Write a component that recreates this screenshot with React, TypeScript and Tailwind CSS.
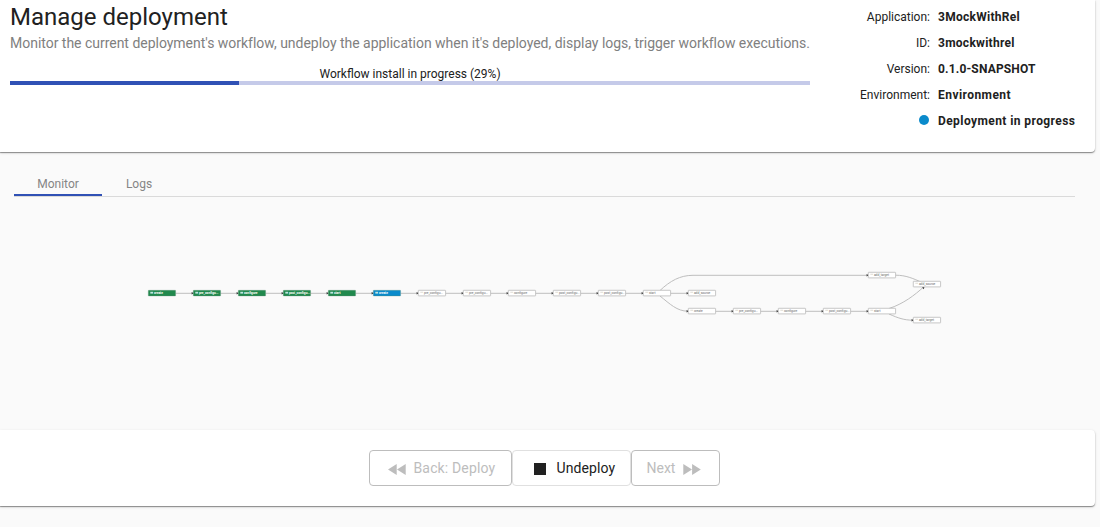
import React from "react";

const details = [
  { label: "Application:", value: "3MockWithRel", tracking: "tracking-[0.27px]" },
  { label: "ID:", value: "3mockwithrel", tracking: "tracking-[0.27px]" },
  { label: "Version:", value: "0.1.0-SNAPSHOT", tracking: "tracking-[0.17px]" },
  { label: "Environment:", value: "Environment", tracking: "tracking-[0.45px]" },
];

type Status = "done" | "running" | "pending";
type Step = { x: number; y: number; name: string; status: Status };

const mainSteps: [string, Status][] = [
  ["create", "done"],
  ["pre_configu...", "done"],
  ["configure", "done"],
  ["post_configu...", "done"],
  ["start", "done"],
  ["create", "running"],
  ["pre_configu...", "pending"],
  ["pre_configu...", "pending"],
  ["configure", "pending"],
  ["post_configu...", "pending"],
  ["post_configu...", "pending"],
  ["start", "pending"],
  ["add_source", "pending"],
];

const lowerSteps = ["create", "pre_configu...", "configure", "post_configu...", "start"];

const steps: Step[] = [
  ...mainSteps.map(([name, status], i) => ({ x: 148.3 + i * 45, y: 293, name, status })),
  ...lowerSteps.map((name, i) => ({ x: 688.3 + i * 45, y: 311, name, status: "pending" as Status })),
  { x: 868.3, y: 275, name: "add_target", status: "pending" },
  { x: 913.3, y: 284, name: "add_source", status: "pending" },
  { x: 913.3, y: 320, name: "add_target", status: "pending" },
];

const fills: Record<Status, string> = { done: "#21894d", running: "#0a8acb", pending: "#ffffff" };

function StepNode({ x, y, name, status }: Step) {
  const pending = status === "pending";
  return (
    <g>
      <rect x={x} y={y - 2.7} width={27.3} height={5.6} rx={0.4} fill={fills[status]} stroke={pending ? "#b0b0b0" : "#5e8d76"} strokeWidth={pending ? 0.7 : 0.35} />
      <rect x={x + 2} y={y - 1.2} width={2.8} height={pending ? 0.8 : 1.8} fill={pending ? "#d8d3c8" : "#bfe5e0"} />
      <text x={x + 5.6} y={y + 1.1} fontSize={3.2} fontWeight={pending ? 400 : 700} fill={pending ? "#666" : "#fff"}>{name}</text>
    </g>
  );
}

function Workflow() {
  const arrows: [number, number][] = [
    ...mainSteps.slice(1).map((_, i) => [193.3 + i * 45, 293] as [number, number]),
    ...lowerSteps.map((_, i) => [688.3 + i * 45, 311] as [number, number]),
    [868.3, 275],
    [913.3, 320],
  ];
  return (
    <svg className="block h-[233px] w-full font-[Roboto,sans-serif]" viewBox="0 197 1100 233" width="1100" height="233">
      <g fill="none" stroke="#bebebe" strokeWidth="1">
        {mainSteps.slice(1).map((_, i) => (
          <path key={i} d={`M${175.6 + i * 45} 293.3H${193 + i * 45}`} />
        ))}
        {lowerSteps.slice(1).map((_, i) => (
          <path key={i} d={`M${715.6 + i * 45} 311.3H${733 + i * 45}`} />
        ))}
        <path d="M660 290.5C670 281 680 275.3 693 275.3H868" />
        <path d="M660 296C670 304 677 311.2 688 311.2" />
        <path d="M895.6 275.2C906 275.2 913 278.5 921 282" />
        <path d="M889 308.5C903 304 915 295 923.5 287" />
        <path d="M889 314C898 318 904 320.2 913 320.2" />
      </g>
      <g fill="#333">
        {arrows.map(([x, y], i) => (
          <path key={i} d={`M${x - 1.7} ${y - 1}L${x + 0.4} ${y + 0.2}L${x - 1.7} ${y + 1.4}Z`} />
        ))}
        <path d="M922 287.6L924.4 286.8L923.9 289.2Z" />
      </g>
      {steps.map((step, i) => (
        <StepNode key={i} {...step} />
      ))}
    </svg>
  );
}

function DoubleArrow({ forward = false }: { forward?: boolean }) {
  return (
    <svg className="relative top-px h-[11px] w-[18px]" viewBox="0 0 18 12" preserveAspectRatio="none" fill="currentColor">
      <path d={forward ? "M0.3 0L9 6L0.3 12ZM9.1 0L17.8 6L9.1 12Z" : "M8.7 0L0 6L8.7 12ZM17.7 0L9 6L17.7 12Z"} />
    </svg>
  );
}

export default function App() {
  return (
    <div className="h-[527px] w-[1100px] overflow-hidden bg-[#fafafa] font-[Roboto,sans-serif] text-[#212121]">
      <header className="flex h-[152px] w-[1095px] rounded-br bg-white shadow-[0_1px_1px_rgba(0,0,0,0.38),0_1px_3px_rgba(0,0,0,0.16)]">
        <div className="ml-[10px] w-[800px]">
          <h1 className="h-[33px] whitespace-nowrap pt-px text-2xl leading-[33px]">Manage deployment</h1>
          <p className="h-5 whitespace-nowrap text-sm leading-5 tracking-[-0.02px] text-[#808080]">
            Monitor the current deployment's workflow, undeploy the application when it's deployed, display logs, trigger workflow executions.
          </p>
          <div className="mt-[13px] h-[15px] pt-px text-center text-xs leading-[15px]">Workflow install in progress (29%)</div>
          <div className="h-1 bg-[#c5cae9]">
            <div className="h-full w-[228.5px] bg-[#3051b5]" />
          </div>
        </div>
        <dl className="mt-1 ml-[20px] text-xs leading-[26px]">
          {details.map((d) => (
            <div key={d.label} className="flex h-[26px]">
              <dt className="mr-2 w-[100px] text-right">{d.label}</dt>
              <dd className={`font-bold whitespace-nowrap ${d.tracking}`}>{d.value}</dd>
            </div>
          ))}
          <div className="flex h-[26px] items-center">
            <dt className="mr-2 flex w-[100px] justify-end pr-px">
              <span className="relative -top-px size-[10px] rounded-full bg-[#0a8acb]" />
            </dt>
            <dd className="font-bold whitespace-nowrap tracking-[0.42px]">Deployment in progress</dd>
          </div>
        </dl>
      </header>

      <nav className="mt-5 ml-[14px] flex h-[25px] w-[1061px] border-b border-[#dadada] text-xs text-[#858585]">
        <div className="h-6 w-[88px] border-b-2 border-[#3051b5] pt-px text-center leading-[23px]">Monitor</div>
        <div className="w-[74px] pt-px text-center leading-[23px]">Logs</div>
      </nav>

      <Workflow />

      <footer className="flex h-[76px] w-[1095px] justify-center rounded-r bg-white pr-[7px] pt-5 text-sm shadow-[0_1px_1px_rgba(0,0,0,0.38),0_1px_3px_rgba(0,0,0,0.16)]">
        <button className="flex h-9 w-[143px] items-center rounded border border-[#bdbdbd] pl-[18px] text-[#bdbdbd]">
          <DoubleArrow />
          <span className="ml-2 tracking-[0.15px]">Back: Deploy</span>
        </button>
        <button className="flex h-9 w-[119px] items-center rounded border border-[#e0e0e0] pl-[21px]">
          <span className="relative top-px size-3 bg-[#212121]" />
          <span className="ml-[11px] tracking-[0.1px]">Undeploy</span>
        </button>
        <button className="flex h-9 w-[89px] items-center rounded border border-[#bdbdbd] pl-[15px] text-[#bdbdbd]">
          <span className="mr-2">Next</span>
          <DoubleArrow forward />
        </button>
      </footer>
    </div>
  );
}
